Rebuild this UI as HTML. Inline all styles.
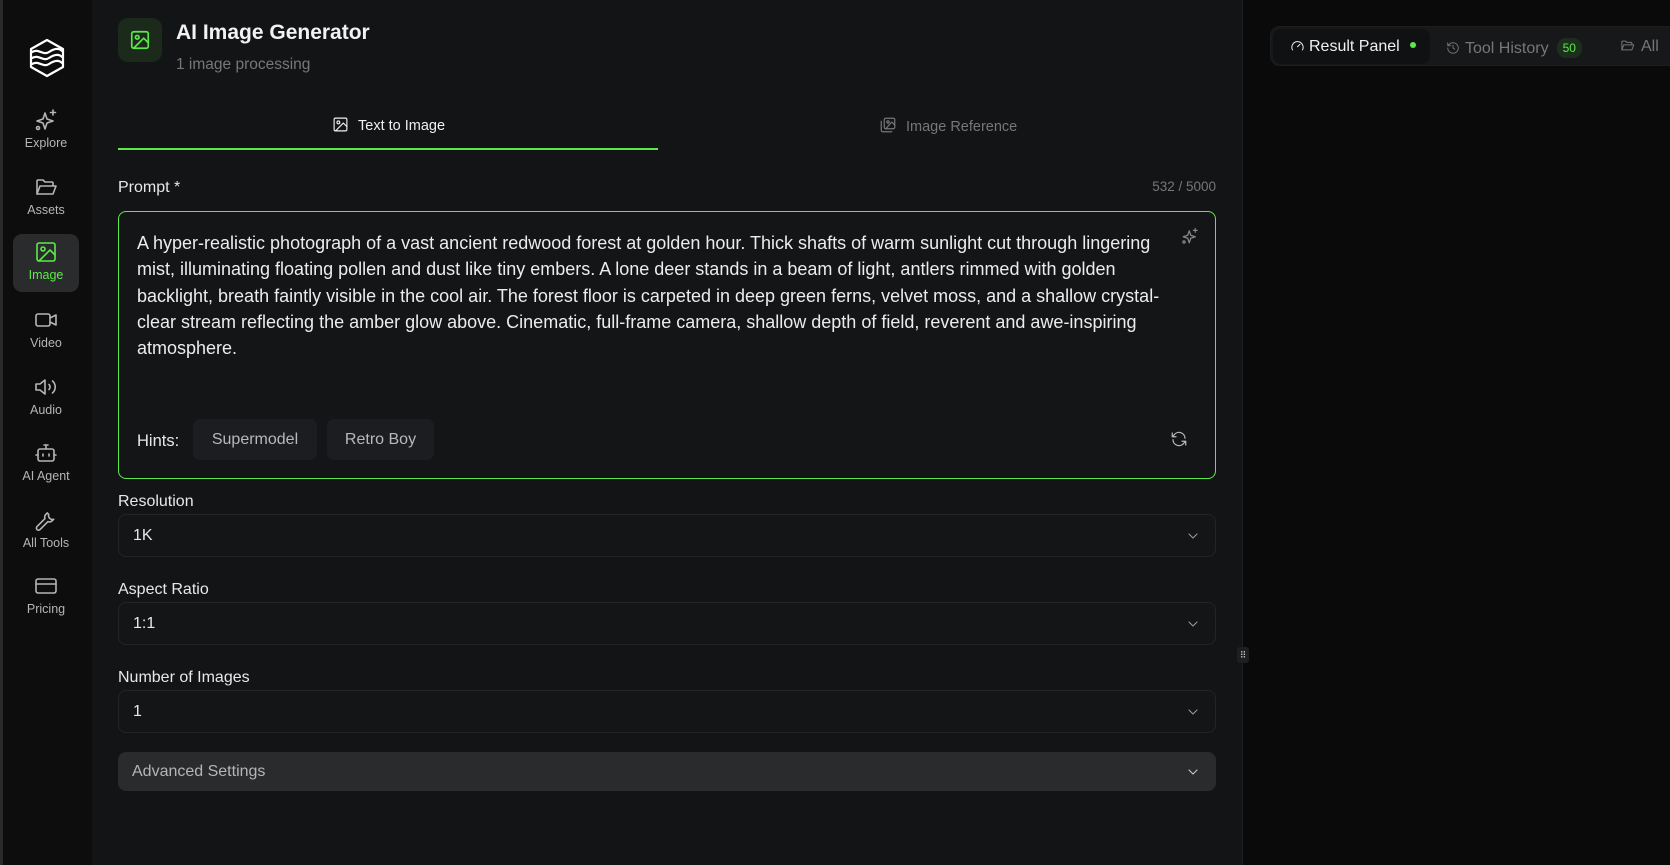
<!DOCTYPE html>
<html><head><meta charset="utf-8"><style>
*{box-sizing:border-box;margin:0;padding:0}
body{width:1670px;height:865px;overflow:hidden;background:#0a0a0a;font-family:"Liberation Sans",Arial,sans-serif;position:relative;color:#fff}
.a{position:absolute}
svg{fill:none;stroke:currentColor;stroke-width:1.6;stroke-linecap:round;stroke-linejoin:round}
.side{left:0;top:0;width:92px;height:865px;background:#0d0d0d;border-left:3px solid #2a2a2a}
.nav{position:absolute;left:10px;width:66px;height:57px;text-align:center;color:#b5b5b5;font-size:12.5px}
.nav svg{width:24px;height:24px;display:block;margin:6px auto 4px}
.main{left:92px;top:0;width:1151px;height:865px;background:#131416;border-right:1px solid #1f2022}
.sel{position:absolute;left:118px;width:1098px;height:43px;border:1px solid #232427;border-radius:8px;background:#141517;font-size:16px;color:#e8e8e8;padding:12px 14px}
.lab{position:absolute;left:118px;font-size:16px;color:#e8e8e8}
.chev{position:absolute;right:14px;top:13px;width:16px;height:16px;color:#999}
.chip{position:absolute;top:419px;height:41px;background:#1c1d20;border-radius:7px;color:#b8b8b8;font-size:16px;padding:12px 0;text-align:center;white-space:nowrap}
</style></head><body>
<div class="a side">
 <svg class="a" style="left:24px;top:38px;width:40px;height:40px;stroke:#fff;stroke-width:2.2" viewBox="0 0 40 40"><path d="M20 2 L36 11 V29 L20 38 L4 29 V11 Z"/><path d="M5 14 C12 10 16 18 22 14 S32 10 35 13"/><path d="M5 20 C12 16 16 24 22 20 S32 16 35 19"/><path d="M5 26 C12 22 16 30 22 26 S32 22 35 25"/></svg>
 <div class="nav" style="top:102px"><svg viewBox="0 0 24 24"><path d="M11 5 L13 11 L19 13 L13 15 L11 21 L9 15 L3 13 L9 11 Z"/><path d="M19 2v5M16.5 4.5h5"/><circle cx="4" cy="20" r="1.5"/></svg>Explore</div>
 <div class="nav" style="top:169px"><svg viewBox="0 0 24 24"><path d="M3 19V6a1 1 0 0 1 1-1h5l2 2h7a1 1 0 0 1 1 1v2"/><path d="M3 19l3-8h16l-3 8z"/></svg>Assets</div>
 <div class="nav" style="top:234px;background:#2a2b2c;border-radius:9px;color:#5ee94a;height:58px"><svg viewBox="0 0 24 24"><rect x="3" y="3" width="18" height="18" rx="2"/><circle cx="9" cy="9" r="2"/><path d="M21 15l-5-5L5 21"/></svg>Image</div>
 <div class="nav" style="top:302px"><svg viewBox="0 0 24 24"><rect x="2" y="6" width="14" height="12" rx="2"/><path d="M16 10l6-3v10l-6-3"/></svg>Video</div>
 <div class="nav" style="top:369px"><svg viewBox="0 0 24 24"><path d="M11 5L6 9H2v6h4l5 4z"/><path d="M15 9.5a3.5 3.5 0 0 1 0 5M18.5 6a8 8 0 0 1 0 12"/></svg>Audio</div>
 <div class="nav" style="top:435px"><svg viewBox="0 0 24 24"><rect x="4" y="8" width="16" height="12" rx="2"/><path d="M12 8V4M10 4h4M9 13v2M15 13v2M2 14h2M20 14h2"/></svg>AI Agent</div>
 <div class="nav" style="top:502px"><svg viewBox="0 0 24 24"><path d="M14.7 6.3a4 4 0 0 0 5 5l-1.4 1.4a4 4 0 0 1-4.3.9L6 21.6a2 2 0 0 1-3-3L11 10.6a4 4 0 0 1 .9-4.3l1.4-1.4a4 4 0 0 0 1.4 1.4z"/></svg>All Tools</div>
 <div class="nav" style="top:568px"><svg viewBox="0 0 24 24"><rect x="2" y="5" width="20" height="14" rx="2"/><path d="M2 10h20"/></svg>Pricing</div>
</div>
<div class="a main"></div>
<div class="a" style="left:118px;top:18px;width:44px;height:44px;border-radius:10px;background:#1b2a1b"><svg style="position:absolute;left:11px;top:11px;width:22px;height:22px;color:#5ee94a;stroke-width:1.8" viewBox="0 0 24 24"><rect x="3" y="3" width="18" height="18" rx="2"/><circle cx="9" cy="9" r="2"/><path d="M21 15l-5-5L5 21"/></svg></div>
<div class="a" style="left:176px;top:21px;font-size:21px;font-weight:bold;color:#f2f2f2">AI Image Generator</div>
<div class="a" style="left:176px;top:56px;font-size:15.5px;color:#777">1 image processing</div>
<div class="a" style="left:332px;top:116px;font-size:14.5px;color:#f0f0f0"><svg style="width:17px;height:17px;vertical-align:-3px;margin-right:9px" viewBox="0 0 24 24"><rect x="3" y="3" width="18" height="18" rx="2"/><circle cx="9" cy="9" r="2"/><path d="M21 15l-5-5L5 21"/></svg>Text to Image</div>
<div class="a" style="left:118px;top:148px;width:540px;height:2px;background:#5ee94a"></div>
<div class="a" style="left:879px;top:116px;font-size:14.5px;color:#777"><svg style="width:18px;height:18px;vertical-align:-3px;margin-right:9px" viewBox="0 0 24 24"><rect x="7" y="3" width="14" height="14" rx="2"/><path d="M3 7v12a2 2 0 0 0 2 2h12"/><circle cx="12" cy="8" r="1.5"/><path d="M21 12l-4-4-8 9"/></svg>Image Reference</div>
<div class="lab" style="top:179px">Prompt *</div>
<div class="a" style="right:454px;top:179px;font-size:13.5px;color:#777">532 / 5000</div>
<div class="a" style="left:118px;top:211px;width:1098px;height:268px;border:1px solid #5ee94a;border-radius:8px;background:#141517"></div>
<div class="a" style="left:137px;top:230px;width:1035px;font-size:18px;line-height:26.3px;color:#ececec">A hyper-realistic photograph of a vast ancient redwood forest at golden hour. Thick shafts of warm sunlight cut through lingering mist, illuminating floating pollen and dust like tiny embers. A lone deer stands in a beam of light, antlers rimmed with golden backlight, breath faintly visible in the cool air. The forest floor is carpeted in deep green ferns, velvet moss, and a shallow crystal-clear stream reflecting the amber glow above. Cinematic, full-frame camera, shallow depth of field, reverent and awe-inspiring atmosphere.</div>
<svg class="a" style="left:1181px;top:227px;width:18px;height:18px;color:#888" viewBox="0 0 24 24"><path d="M11 5 L13 11 L19 13 L13 15 L11 21 L9 15 L3 13 L9 11 Z"/><path d="M19 2v5M16.5 4.5h5"/><circle cx="4" cy="20" r="1.5"/></svg>
<div class="a" style="left:137px;top:432px;font-size:16.5px;color:#e8e8e8">Hints:</div>
<div class="chip" style="left:193px;width:124px">Supermodel</div>
<div class="chip" style="left:327px;width:107px">Retro Boy</div>
<svg class="a" style="left:1170px;top:430px;width:18px;height:18px;color:#bbb" viewBox="0 0 24 24"><path d="M20 11a8 8 0 0 0-14.5-4.5L3 9M3 4v5h5M4 13a8 8 0 0 0 14.5 4.5L21 15M21 20v-5h-5"/></svg>
<div class="lab" style="top:493px">Resolution</div>
<div class="sel" style="top:514px">1K<svg class="chev" viewBox="0 0 24 24"><path d="M6 9l6 6 6-6"/></svg></div>
<div class="lab" style="top:581px">Aspect Ratio</div>
<div class="sel" style="top:602px">1:1<svg class="chev" viewBox="0 0 24 24"><path d="M6 9l6 6 6-6"/></svg></div>
<div class="lab" style="top:669px">Number of Images</div>
<div class="sel" style="top:690px">1<svg class="chev" viewBox="0 0 24 24"><path d="M6 9l6 6 6-6"/></svg></div>
<div class="sel" style="top:752px;height:39px;background:#2a2b2d;border-color:#2a2b2d;color:#b5b5b5;padding:10px 13px">Advanced Settings<svg class="chev" style="top:11px;color:#ccc" viewBox="0 0 24 24"><path d="M6 9l6 6 6-6"/></svg></div>
<div class="a" style="left:1237px;top:647px;width:12px;height:16px;background:#1e1f21;border-radius:3px;font-size:9px;color:#ccc;text-align:center;line-height:16px">⠿</div>
<div class="a" style="left:1270px;top:26px;width:410px;height:40px;background:#17181a;border-radius:10px;border:1px solid #1c1d1f"></div>
<div class="a" style="left:1273px;top:29px;width:157px;height:35px;background:#101113;border-radius:8px"></div>
<div class="a" style="left:1290px;top:38px;font-size:16px;color:#f0f0f0"><svg style="width:15px;height:15px;vertical-align:-2px;margin-right:4px" viewBox="0 0 24 24"><path d="M4 19a9 9 0 1 1 16 0"/><path d="M12 14l4-4"/></svg>Result Panel<span style="display:inline-block;width:6px;height:6px;background:#5ee94a;border-radius:50%;margin-left:10px;vertical-align:3px"></span></div>
<div class="a" style="left:1446px;top:38px;font-size:16px;color:#777"><svg style="width:14px;height:14px;vertical-align:-2px;margin-right:5px" viewBox="0 0 24 24"><path d="M3 12a9 9 0 1 0 3-6.7L3 8M3 3v5h5M12 7v5l3 2"/></svg>Tool History<span style="display:inline-block;margin-left:8px;background:#1c2e1c;color:#5ee94a;font-size:12px;border-radius:9px;padding:3px 6px;vertical-align:1px">50</span></div>
<div class="a" style="left:1620px;top:38px;font-size:16px;color:#777"><svg style="width:15px;height:15px;vertical-align:-2px;margin-right:6px" viewBox="0 0 24 24"><path d="M3 19V6a1 1 0 0 1 1-1h5l2 2h7a1 1 0 0 1 1 1v2"/><path d="M3 19l3-8h16l-3 8z"/></svg>All</div>
</body></html>
